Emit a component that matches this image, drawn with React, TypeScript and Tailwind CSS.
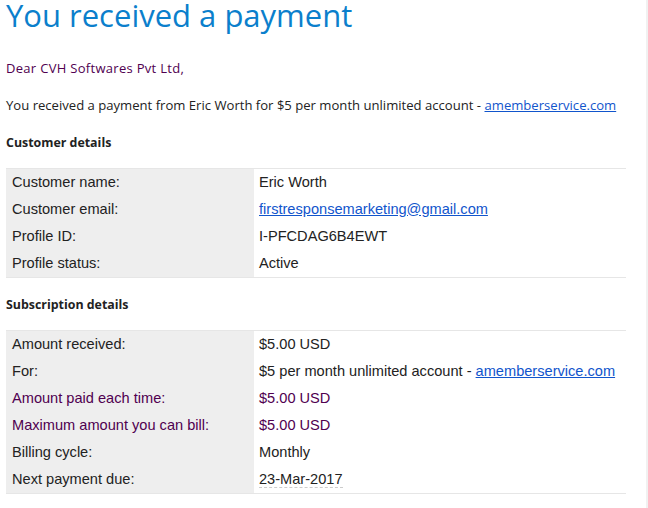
export default function App() {
  const seg = "font-['Segoe_UI','Open_Sans',sans-serif]";
  const ar = "font-['Liberation_Sans',Arial,sans-serif]";
  const Row = ({ label, value, purple }: { label: string; value: React.ReactNode; purple?: boolean }) => (
    <div className={`flex h-[27px] items-center ${purple ? 'text-[#500050]' : 'text-[#222]'}`}>
      <div className="w-[248px] h-full bg-[#eeeeee] pl-[6px] flex items-center">{label}</div>
      <div className="flex-1 h-full pl-[5px] flex items-center">{value}</div>
    </div>
  );
  return (
    <div className="w-[648px] h-[508px] bg-white overflow-hidden flex">
      <div className="w-[646px] pl-[6px] pr-[20px]">
        <div className={`${seg} text-[31px] leading-[30px] text-[#0b7fcc] whitespace-nowrap`}>You received a payment</div>
        <div className={`${seg} text-[13px] leading-[20px] text-[#500050] mt-[28px] tracking-[0.3px]`}>Dear CVH Softwares Pvt Ltd,</div>
        <div className={`${seg} text-[13.1px] leading-[20px] text-[#222] mt-[17px] whitespace-nowrap`}>
          You received a payment from Eric Worth for $5 per month unlimited account -{' '}
          <a className="text-[#1155cc] underline">amemberservice.com</a>
        </div>
        <div className={`${seg} text-[12.4px] leading-[20px] font-bold text-[#222] mt-[18px]`}>Customer details</div>
        <div className={`${ar} text-[14.6px] mt-[15px] border-y border-[#e6e6e6]`}>
          <Row label="Customer name:" value="Eric Worth" />
          <Row label="Customer email:" value={<a className="text-[#1155cc] underline">firstresponsemarketing@gmail.com</a>} />
          <Row label="Profile ID:" value="I-PFCDAG6B4EWT" />
          <Row label="Profile status:" value="Active" />
        </div>
        <div className={`${seg} text-[12.4px] leading-[20px] font-bold text-[#222] mt-[17px]`}>Subscription details</div>
        <div className={`${ar} text-[14.6px] mt-[15px] border-y border-[#e6e6e6]`}>
          <Row label="Amount received:" value="$5.00 USD" />
          <Row label="For:" value={<span>$5 per month unlimited account - <a className="text-[#1155cc] underline">amemberservice.com</a></span>} />
          <Row purple label="Amount paid each time:" value="$5.00 USD" />
          <Row purple label="Maximum amount you can bill:" value="$5.00 USD" />
          <Row label="Billing cycle:" value="Monthly" />
          <Row label="Next payment due:" value={<span className="border-b border-dashed border-[#cccccc] leading-[15px]">23-Mar-2017</span>} />
        </div>
      </div>
      <div className="w-[2px] h-full bg-[#f1f1f1]" />
    </div>
  );
}
